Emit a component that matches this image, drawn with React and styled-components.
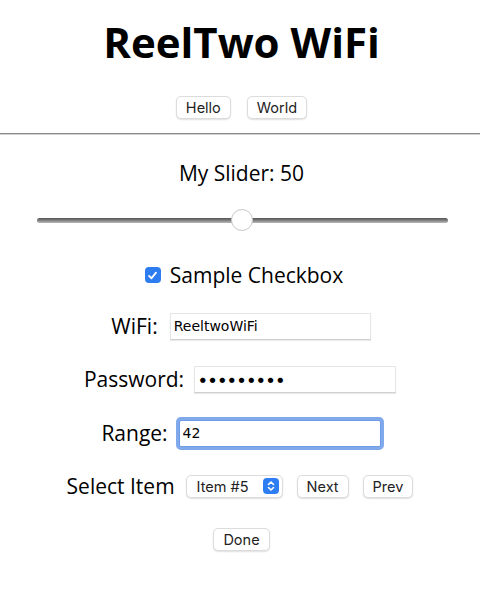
import React, { useState } from "react";
import styled, { createGlobalStyle } from "styled-components";

const Global = createGlobalStyle`
  html, body { margin: 0; padding: 0; background: #fff; }
  body { width: 480px; font-family: "Open Sans", "DejaVu Sans", sans-serif; color: #000; }
`;

const Page = styled.div`
  display: flex;
  flex-direction: column;
  align-items: center;
  width: 480px;
`;

const Title = styled.h1`
  margin: 14px 0 0 3px;
  font-family: "Open Sans", sans-serif;
  font-weight: 700;
  font-size: 42px;
  line-height: 56px;
`;

const Row = styled.div`
  display: flex;
  align-items: center;
  justify-content: center;
  gap: ${(p) => p.$gap || 10}px;
  margin-top: ${(p) => p.$mt || 0}px;
  padding-left: ${(p) => p.$shift || 0}px;
  height: ${(p) => p.$h || 28}px;
`;

const Button = styled.button`
  font-family: Inter, "Liberation Sans", sans-serif;
  font-size: 14.5px;
  color: #222;
  background: #fff;
  border: 1px solid #dcdcdc;
  border-radius: 5px;
  box-shadow: 0 1px 1.5px rgba(0, 0, 0, 0.12);
  height: 23px;
  padding: 0 9px;
  line-height: 21px;
`;

const Rule = styled.hr`
  width: 480px;
  margin: 14px 0 0;
  border: none;
  border-top: 1px solid #8a8a8a;
  border-bottom: 1px solid #d0d0d0;
  height: 0;
`;

const Label = styled.span`
  font-family: "Open Sans", sans-serif;
  font-weight: 500;
  font-size: 21px;
  line-height: 28px;
  color: #000;
`;

const Slider = styled.input`
  -webkit-appearance: none;
  appearance: none;
  width: 411px;
  height: 22px;
  margin: 0;
  background: transparent;
  &::-webkit-slider-runnable-track {
    height: 5px;
    border-radius: 3px;
    background: linear-gradient(#555 0%, #777 40%, #bbb 100%);
  }
  &::-webkit-slider-thumb {
    -webkit-appearance: none;
    width: 22px;
    height: 22px;
    border-radius: 50%;
    background: #fff;
    border: 1px solid #c8c8c8;
    margin-top: -8.5px;
    box-sizing: border-box;
  }
`;

const CheckLabel = styled.label`
  display: flex;
  align-items: center;
  gap: 9px;
`;

const HiddenCheck = styled.input`
  position: absolute;
  opacity: 0;
  width: 0;
  height: 0;
`;

const CheckBox = styled.span`
  width: 16px;
  height: 16px;
  border-radius: 4px;
  background: #2d7cf0;
  display: flex;
  align-items: center;
  justify-content: center;
`;

const TextInput = styled.input`
  font-family: ${(p) => (p.$dots ? `Inter, "Liberation Sans"` : `"DejaVu Sans"`)}, sans-serif;
  font-size: ${(p) => p.$fs || 14}px;
  letter-spacing: ${(p) => p.$ls || 0}px;
  color: #000;
  width: ${(p) => p.$w || 201}px;
  height: 27px;
  box-sizing: border-box;
  padding: 0 3px;
  border: 1px solid #e6e6e6;
  border-bottom-color: #cfcfcf;
  box-shadow: 0 1px 1px rgba(0, 0, 0, 0.08);
  outline: none;
  background: #fff;
  ${(p) =>
    p.$focus &&
    `box-shadow: 0 0 0 3px #80a9eb; border-color: #6f9ce6; border-radius: 2px;`}
`;

const Select = styled.div`
  position: relative;
  display: flex;
  align-items: center;
  justify-content: space-between;
  width: 97px;
  height: 23px;
  box-sizing: border-box;
  padding: 0 3px 0 10px;
  font-family: Inter, "Liberation Sans", sans-serif;
  font-size: 14.5px;
  color: #222;
  background: #fff;
  border: 1px solid #dcdcdc;
  border-radius: 5px;
  box-shadow: 0 1px 1.5px rgba(0, 0, 0, 0.12);
`;

const Stepper = styled.span`
  width: 16px;
  height: 16px;
  border-radius: 4px;
  background: #2f7df3;
  display: flex;
  align-items: center;
  justify-content: center;
`;

export default function App() {
  const [val, setVal] = useState(50);
  return (
    <>
      <Global />
      <Page>
        <Title>ReelTwo WiFi</Title>
        <Row $mt={26} $h={23} $gap={16} $shift={3}>
          <Button>Hello</Button>
          <Button>World</Button>
        </Row>
        <Rule />
        <Row $mt={24} $h={28} $shift={3}>
          <Label>My Slider: {val}</Label>
        </Row>
        <Row $mt={22} $h={22} $shift={4}>
          <Slider
            type="range"
            min="0"
            max="100"
            value={val}
            onChange={(e) => setVal(+e.target.value)}
          />
        </Row>
        <Row $mt={30} $h={28} $shift={8}>
          <CheckLabel>
            <HiddenCheck type="checkbox" defaultChecked />
            <CheckBox>
              <svg width="11" height="11" viewBox="0 0 12 12">
                <path
                  d="M2.2 6.4 L4.9 9 L9.8 2.9"
                  fill="none"
                  stroke="#fff"
                  strokeWidth="2"
                  strokeLinecap="round"
                  strokeLinejoin="round"
                />
              </svg>
            </CheckBox>
            <Label>Sample Checkbox</Label>
          </CheckLabel>
        </Row>
        <Row $mt={23} $h={28} $gap={12} $shift={2}>
          <Label>WiFi:</Label>
          <TextInput defaultValue="ReeltwoWiFi" $w={201} />
        </Row>
        <Row $mt={25} $h={28} $gap={10}>
          <Label>Password:</Label>
          <TextInput type="password" defaultValue="123456789" $w={202} $fs={17} $ls={0.1} $dots />
        </Row>
        <Row $mt={26} $h={28} $gap={11} $shift={2}>
          <Label>Range:</Label>
          <TextInput defaultValue="42" $w={202} $focus />
        </Row>
        <Row $mt={25} $h={28} $gap={11} $shift={0}>
          <Label>Select Item</Label>
          <Select>
            <span>Item #5</span>
            <Stepper>
              <svg width="10" height="12" viewBox="0 0 10 12">
                <path
                  d="M2.5 4.5 L5 2 L7.5 4.5 M2.5 7.5 L5 10 L7.5 7.5"
                  fill="none"
                  stroke="#fff"
                  strokeWidth="1.6"
                  strokeLinecap="round"
                  strokeLinejoin="round"
                />
              </svg>
            </Stepper>
          </Select>
          <Row $gap={14} $shift={3}>
            <Button>Next</Button>
            <Button>Prev</Button>
          </Row>
        </Row>
        <Row $mt={25} $h={28} $shift={3}>
          <Button>Done</Button>
        </Row>
      </Page>
    </>
  );
}
